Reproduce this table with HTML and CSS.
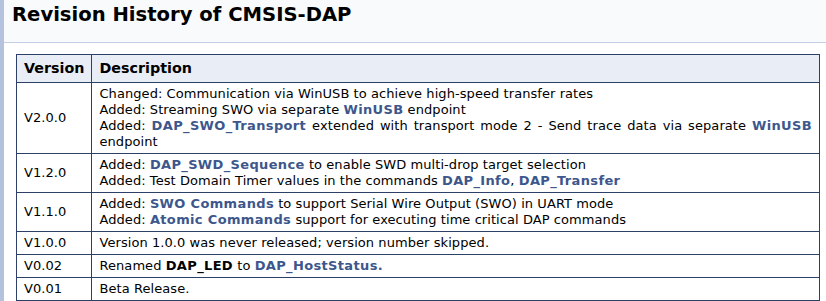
FILE: index.html
```html
<!DOCTYPE html>
<html>
<head>
<meta charset="utf-8">
<link rel="stylesheet" href="styles.css">
</head>
<body>
<div class="page">
  <div class="header"><div class="title">Revision History of CMSIS-DAP</div></div>
  <div class="contents">
    <table class="rev">
      <tr><th class="ver">Version</th><th>Description</th></tr>
      <tr><td class="ver">V2.0.0</td><td class="desc">Changed: Communication via WinUSB to achieve high-speed transfer rates<br>Added: Streaming SWO via separate <a class="el">WinUSB</a> endpoint<br>Added: <a class="el">DAP_SWO_Transport</a> extended with transport mode 2 - Send trace data via separate <a class="el">WinUSB</a> endpoint</td></tr>
      <tr><td class="ver">V1.2.0</td><td class="desc">Added: <a class="el">DAP_SWD_Sequence</a> to enable SWD multi-drop target selection<br>Added: Test Domain Timer values in the commands <a class="el">DAP_Info</a>, <a class="el">DAP_Transfer</a></td></tr>
      <tr><td class="ver">V1.1.0</td><td class="desc">Added: <a class="el">SWO Commands</a> to support Serial Wire Output (SWO) in UART mode<br>Added: <a class="el">Atomic Commands</a> support for executing time critical DAP commands</td></tr>
      <tr><td class="ver">V1.0.0</td><td class="desc">Version 1.0.0 was never released; version number skipped.</td></tr>
      <tr><td class="ver">V0.02</td><td class="desc">Renamed <b class="strong">DAP_LED</b> to <a class="el">DAP_HostStatus.</a></td></tr>
      <tr><td class="ver">V0.01</td><td class="desc">Beta Release.</td></tr>
    </table>
  </div>
</div>
</body>
</html>
```
FILE: styles.css
```css
html, body { margin: 0; padding: 0; background: #fff; }
body { font-family: "DejaVu Sans", Verdana, sans-serif; font-size: 13px; color: #000; }
.page { border-left: 4px solid #B4C2DE; min-height: 301px; box-sizing: border-box; }
.header { background: #F9FAFC; border-bottom: 1px solid #C4CFE5; height: 43px; box-sizing: border-box; padding: 1px 0 0 8px; }
.title { font-size: 19.6px; font-weight: bold; line-height: 28px; color: #000; }
.contents { padding: 11px 0 0 12px; }
table.rev { border-collapse: collapse; width: 804px; }
.rev th, .rev td { border: 1px solid #2D4068; padding: 3px 7px 3px 7px; text-align: left; vertical-align: middle; line-height: 16px; letter-spacing: 0.07px; }
.rev th { background: #E9EEF6; font-weight: bold; font-size: 14.3px; padding: 5px 7px 5px 7px; line-height: 17px; letter-spacing: 0; }
.rev .ver { width: 60px; }
.rev td.desc { text-align: justify; }
a.el { color: #3D578C; font-weight: bold; text-decoration: none; letter-spacing: 0.35px; }
.strong { letter-spacing: 0.35px; }
```
